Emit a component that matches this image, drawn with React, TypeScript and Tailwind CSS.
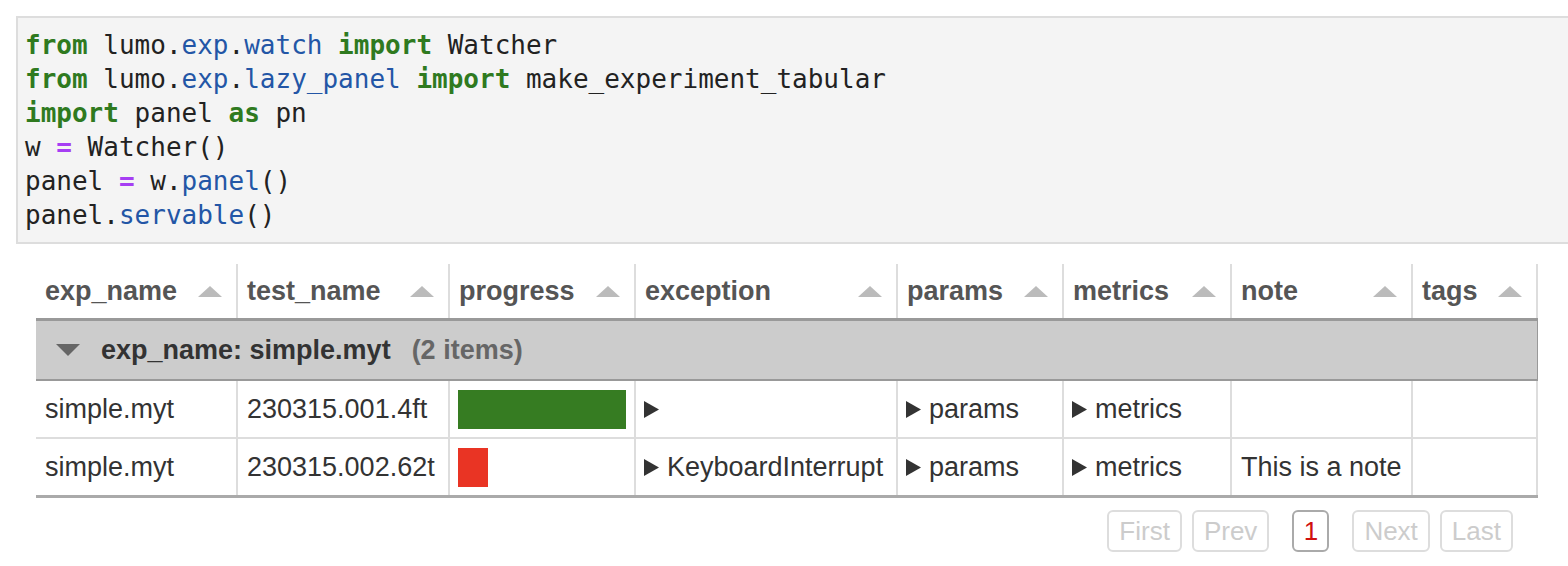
import React from "react";

const KW = ({ children }: { children: React.ReactNode }) => (
  <span className="font-bold text-[#2f7a1f]">{children}</span>
);
const PR = ({ children }: { children: React.ReactNode }) => (
  <span className="text-[#2356a6]">{children}</span>
);
const OP = ({ children }: { children: React.ReactNode }) => (
  <span className="font-bold text-[#a63ef3]">{children}</span>
);

const SortArrow = () => (
  <span className="block w-0 h-0 border-l-[12px] border-r-[12px] border-b-[11px] border-l-transparent border-r-transparent border-b-[#bbbbbb]" />
);

const RightTri = () => (
  <svg width="15" height="17" viewBox="0 0 15 17" className="shrink-0">
    <polygon points="0,0 15,8.5 0,17" fill="#333333" />
  </svg>
);

const cols = [
  { name: "exp_name", w: "w-[202px]" },
  { name: "test_name", w: "w-[212px]" },
  { name: "progress", w: "w-[186px]" },
  { name: "exception", w: "w-[262px]" },
  { name: "params", w: "w-[166px]" },
  { name: "metrics", w: "w-[168px]" },
  { name: "note", w: "w-[181px]" },
  { name: "tags", w: "w-[125px]" },
];

const rows = [
  { exp: "simple.myt", test: "230315.001.4ft", pct: 100, color: "#367c22", exc: "", note: "" },
  { exp: "simple.myt", test: "230315.002.62t", pct: 18, color: "#e93424", exc: "KeyboardInterrupt", note: "This is a note" },
];

export default function App() {
  return (
    <div className="w-[1568px] h-[566px] overflow-hidden bg-white pt-4 font-['Liberation_Sans',Arial,sans-serif]">
      <pre className="ml-4 border-2 border-r-0 border-[#dddddd] bg-[#f4f4f4] pl-[7px] py-[10px] font-['DejaVu_Sans_Mono',monospace] text-[26px] leading-[34px] text-[#222222]">
        <KW>from</KW> lumo.<PR>exp</PR>.<PR>watch</PR> <KW>import</KW> Watcher{"\n"}
        <KW>from</KW> lumo.<PR>exp</PR>.<PR>lazy_panel</PR> <KW>import</KW> make_experiment_tabular{"\n"}
        <KW>import</KW> panel <KW>as</KW> pn{"\n"}
        w <OP>=</OP> Watcher(){"\n"}
        panel <OP>=</OP> w.<PR>panel</PR>(){"\n"}
        panel.<PR>servable</PR>()
      </pre>

      <div className="ml-[36px] mt-5 w-[1502px]">
        {/* header */}
        <div className="flex border-b-[3px] border-[#999999]">
          {cols.map((c) => (
            <div
              key={c.name}
              className={`${c.w} h-[54px] flex items-center justify-between pl-[9px] pr-[14px] border-r-2 border-[#dddddd]`}
            >
              <span className="text-[27px] font-bold text-[#555555]">{c.name}</span>
              <SortArrow />
            </div>
          ))}
        </div>

        {/* group row */}
        <div className="flex items-center h-[60px] bg-[#cccccc] border-b-2 border-r border-[#999999] pl-5">
          <span className="block w-0 h-0 border-l-[12px] border-r-[12px] border-t-[12px] border-l-transparent border-r-transparent border-t-[#666666]" />
          <span className="ml-[21px] text-[27px] font-bold text-[#333333]">exp_name: simple.myt</span>
          <span className="ml-[21px] text-[27px] font-bold text-[#666666]">(2 items)</span>
        </div>

        {/* data rows */}
        {rows.map((r, ri) => (
          <div
            key={ri}
            className={`flex text-[27px] text-[#333333] ${
              ri === rows.length - 1 ? "border-b-[3px] border-[#aaaaaa] h-[59px]" : "border-b-2 border-[#dddddd] h-[58px]"
            }`}
          >
            <div className="w-[202px] flex items-center pl-[9px] border-r-2 border-[#dddddd]">{r.exp}</div>
            <div className="w-[212px] flex items-center pl-[9px] border-r-2 border-[#dddddd] whitespace-nowrap">{r.test}</div>
            <div className="w-[186px] flex items-center px-[8px] border-r-2 border-[#dddddd]">
              <div className="h-[39px]" style={{ width: `${r.pct}%`, backgroundColor: r.color }} />
            </div>
            <div className="w-[262px] flex items-center gap-[8px] pl-[8px] border-r-2 border-[#dddddd] whitespace-nowrap">
              <RightTri />
              {r.exc && <span>{r.exc}</span>}
            </div>
            <div className="w-[166px] flex items-center gap-[8px] pl-[8px] border-r-2 border-[#dddddd]">
              <RightTri />
              <span>params</span>
            </div>
            <div className="w-[168px] flex items-center gap-[8px] pl-[8px] border-r-2 border-[#dddddd]">
              <RightTri />
              <span>metrics</span>
            </div>
            <div className="w-[181px] flex items-center pl-[9px] border-r-2 border-[#dddddd] whitespace-nowrap">{r.note}</div>
            <div className="w-[125px] border-r-2 border-[#dddddd]" />
          </div>
        ))}

        {/* pagination */}
        <div className="flex justify-end items-center mt-3 pr-[25px] text-[26px]">
          <button className="h-[42px] px-[10px] border-2 border-[#dddddd] rounded-[6px] text-[#cccccc] leading-none">First</button>
          <button className="ml-[10px] h-[42px] px-[10px] border-2 border-[#dddddd] rounded-[6px] text-[#cccccc] leading-none">Prev</button>
          <button className="ml-[23px] h-[42px] w-[37px] border-2 border-[#aaaaaa] rounded-[6px] text-[#d01010] leading-none">1</button>
          <button className="ml-[23px] h-[42px] px-[10px] border-2 border-[#dddddd] rounded-[6px] text-[#cccccc] leading-none">Next</button>
          <button className="ml-[10px] h-[42px] px-[10px] border-2 border-[#dddddd] rounded-[6px] text-[#cccccc] leading-none">Last</button>
        </div>
      </div>
    </div>
  );
}
